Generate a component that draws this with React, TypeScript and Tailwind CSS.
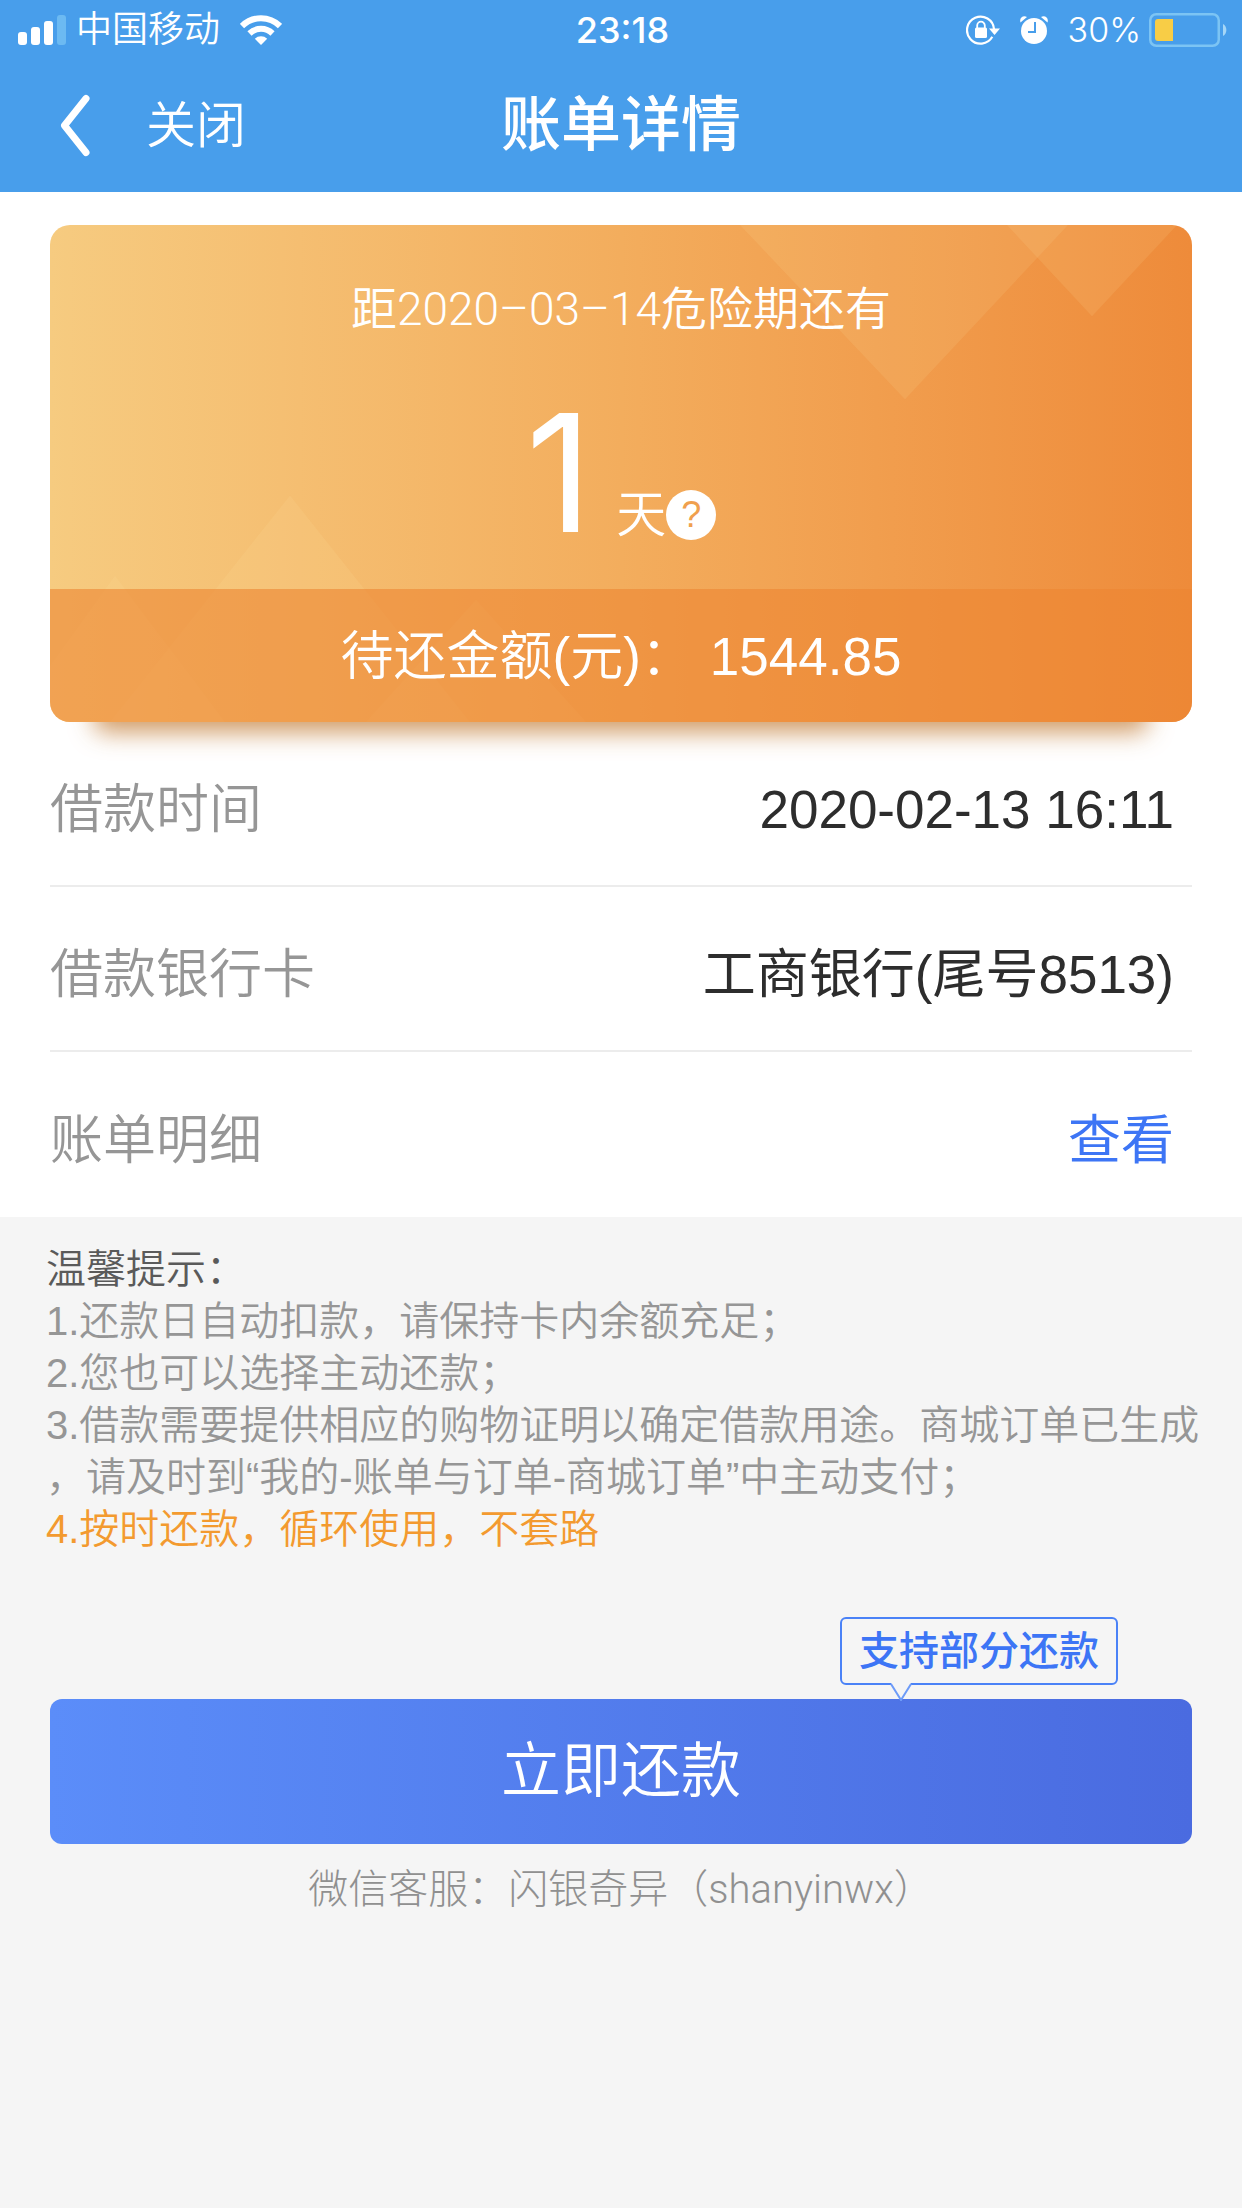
import { ReactNode } from "react";

const SignalIcon = () => (
  <svg
    className="w-12 h-[30px]"
    viewBox="0 0 48 30"
    fill="#fff"
    aria-hidden="true"
  >
    <rect x="0" y="17" width="9" height="13" rx="3" />
    <rect x="13" y="12" width="9" height="18" rx="3" />
    <rect x="26" y="6" width="9" height="24" rx="3" />
    <rect x="39" y="0" width="9" height="30" rx="3" fill="#6cbaf2" />
  </svg>
);

const WifiIcon = () => (
  <svg className="w-[42px] h-[30px]" viewBox="0 0 42 30" aria-hidden="true">
    <g fill="none" stroke="#fff" strokeWidth="6">
      <path d="M2 11A27 27 0 0 1 40 11" />
      <path d="M9.500 18.500A16.500 16.500 0 0 1 32.500 18.500" />
    </g>
    <path fill="#fff" d="M21 30l-6.200-6.200a9 9 0 0 1 12.400 0z" />
  </svg>
);

const RotationLockIcon = () => (
  <svg className="w-[34px] h-[30px]" viewBox="0 0 34 30" aria-hidden="true">
    <path
      d="M26.300 21.800A13.500 13.500 0 1 1 28 14"
      fill="none"
      stroke="#fff"
      strokeWidth="2.200"
    />
    <path fill="#fff" d="M23 13.500h11l-5.500 6.500z" />
    <rect x="9" y="12.500" width="12" height="10.500" rx="1.500" fill="#fff" />
    <path
      d="M11.200 13v-2.500a3.800 3.800 0 0 1 7.600 0V13"
      fill="none"
      stroke="#fff"
      strokeWidth="1.800"
    />
  </svg>
);

const AlarmIcon = () => (
  <svg className="w-7 h-7" viewBox="0 0 28 28" aria-hidden="true">
    <circle cx="14" cy="15" r="13" fill="#fff" />
    <path
      fill="#fff"
      d="M.5 6.500C-1 2 3 -1 7 1zM27.500 6.500C29 2 25 -1 21 1z"
    />
    <path d="M15 6v10H8" fill="none" stroke="#489eeb" strokeWidth="2" />
  </svg>
);

const BatteryIcon = () => (
  <svg className="w-[78px] h-[34px]" viewBox="0 0 78 34" aria-hidden="true">
    <rect
      x="1.250"
      y="1.250"
      width="68.500"
      height="31.500"
      rx="6"
      fill="none"
      stroke="#7cc4f4"
      strokeWidth="2.500"
    />
    <path fill="#f8cd46" d="M9 6h15v22H9a3 3 0 0 1-3-3V9a3 3 0 0 1 3-3z" />
    <path fill="#a5d6f7" d="M74 11a7 7 0 0 1 0 12z" />
  </svg>
);

const BackIcon = () => (
  <svg className="w-[30px] h-16" viewBox="0 0 30 64" aria-hidden="true">
    <path
      d="M26 4.500L4.500 31.500l21.500 27"
      fill="none"
      stroke="#fff"
      strokeWidth="7"
      strokeLinecap="round"
      strokeLinejoin="round"
    />
  </svg>
);

const StatusBar = () => (
  <div className="grid grid-cols-3 items-center h-15 pl-[18px] pr-[15px] text-4xl leading-none">
    <div className="flex items-center">
      <SignalIcon />
      <span className="ml-2.5 mr-5 font-[350]">中国移动</span>
      <WifiIcon />
    </div>
    <span className="text-center font-medium font-[Inter]">23:18</span>
    <div className="flex items-center justify-end">
      <RotationLockIcon />
      <span className="mx-5">
        <AlarmIcon />
      </span>
      <span className="mr-2 text-[34px] font-light font-[Inter]">30%</span>
      <BatteryIcon />
    </div>
  </div>
);

const NavBar = () => (
  <nav className="grid grid-cols-3 items-center h-33 px-15">
    <div className="flex items-center gap-14">
      <button type="button" aria-label="返回">
        <BackIcon />
      </button>
      <button type="button" className="text-[50px] font-[350]">
        关闭
      </button>
    </div>
    <h1 className="text-center text-6xl font-medium">账单详情</h1>
  </nav>
);

// Pale triangles behind the card text
const CardPattern = () => (
  <svg
    className="absolute inset-0 w-full h-full"
    viewBox="0 0 1142 496"
    preserveAspectRatio="none"
    aria-hidden="true"
  >
    <g fill="#ffe9a8" fillOpacity="0.120">
      <path d="M690 0h328L855 174z" />
      <path d="M957 0h170l-85 91z" />
      <path d="M240 270l180 226H60z" />
      <path d="M65 350l110 146H0V440z" />
      <path d="M426 374l110 122H316z" />
    </g>
  </svg>
);

const BillCard = () => (
  <div className="relative mx-[50px]">
    <div className="absolute inset-x-11 bottom-0 h-10 rounded-xl shadow-[0_10px_24px_#c98a4cdd]" />
    <section className="relative overflow-hidden rounded-[20px] bg-linear-to-r from-[#f6cb80] via-[#f3ad5d] to-[#ee8b3a] text-white text-center">
      <CardPattern />
      <div className="relative h-[364px] pt-12">
        <p className="text-[46px] leading-[72px] font-[350] font-['Roboto','Noto_Sans_CJK_SC',sans-serif]">
          距2020–03–14危险期还有
        </p>
        <div className="mt-10 flex items-baseline justify-center">
          <span className="text-[164px] leading-[176px] font-[Inter]">1</span>
          <div className="ml-6 flex items-center">
            <span className="text-[50px] leading-none font-[350]">天</span>
            <button
              type="button"
              aria-label="说明"
              className="size-[50px] rounded-full bg-white text-[#f0a04e] text-4xl leading-[50px]"
            >
              ?
            </button>
          </div>
        </div>
      </div>
      <p className="relative h-[133px] bg-[#ed8632]/60 text-[53px] leading-[135px]">
        <span className="mr-4 font-[350]">待还金额(元)：</span>1544.85
      </p>
    </section>
  </div>
);

const DetailRow = ({
  label,
  children,
}: {
  label: string;
  children: ReactNode;
}) => (
  <div className="flex items-center justify-between h-[165px] pt-3 pr-[18px] border-b-2 border-[#ececec] text-[53px] last:border-b-0">
    <dt className="font-[350] text-[#969696]">{label}</dt>
    <dd className="text-[#2d2d2d]">{children}</dd>
  </div>
);

const Tips = () => (
  <section className="pl-[46px] pr-10 pt-[26px] text-[40px] leading-[52px] text-[#969696] font-[350]">
    <h2 className="text-[#5a5a5a]">温馨提示：</h2>
    <p>1.还款日自动扣款，请保持卡内余额充足；</p>
    <p>2.您也可以选择主动还款；</p>
    <p>
      3.借款需要提供相应的购物证明以确定借款用途。商城订单已生成
      <br />
      ，请及时到“我的-账单与订单-商城订单”中主动支付；
    </p>
    <p className="text-[#f39a2f]">4.按时还款，循环使用，不套路</p>
  </section>
);

const PartialPayBadge = () => (
  <div className="relative w-fit ml-auto mr-[74px] mb-3.5 px-[17px] h-[68px] rounded-md border-2 border-[#4a82f7] text-[40px] leading-16 font-medium text-[#3d75f5]">
    支持部分还款
    <svg
      className="absolute left-12 top-16 w-[22px] h-[18px]"
      viewBox="0 0 22 18"
      aria-hidden="true"
    >
      <path fill="#f5f5f5" d="M1 0l10 18L21 0z" />
      <path d="M1 1l10 16L21 1" fill="none" stroke="#6d9bf8" strokeWidth="2" />
    </svg>
  </div>
);

export default function App() {
  return (
    <div className="min-h-screen bg-[#f5f5f5] font-['Liberation_Sans','Noto_Sans_CJK_SC',sans-serif]">
      <header className="bg-[#489eeb] text-white">
        <StatusBar />
        <NavBar />
      </header>

      <main>
        <div className="bg-white pt-[33px]">
          <BillCard />
          <dl className="mx-[50px]">
            <DetailRow label="借款时间">2020-02-13 16:11</DetailRow>
            <DetailRow label="借款银行卡">工商银行(尾号8513)</DetailRow>
            <DetailRow label="账单明细">
              <a href="#detail" className="text-[#3d75f5]">
                查看
              </a>
            </DetailRow>
          </dl>
        </div>

        <Tips />

        <div className="px-[50px] pt-[62px]">
          <PartialPayBadge />
          <button
            type="button"
            className="w-full h-[145px] rounded-xl bg-linear-to-r from-[#5b8df9] to-[#4a6be0] text-6xl font-[350] text-white"
          >
            立即还款
          </button>
          <p className="mt-4 text-center text-[40px] leading-[60px] font-light text-[#909090] font-['Roboto','Noto_Sans_CJK_SC',sans-serif]">
            微信客服：闪银奇异（shanyinwx）
          </p>
        </div>
      </main>
    </div>
  );
}
